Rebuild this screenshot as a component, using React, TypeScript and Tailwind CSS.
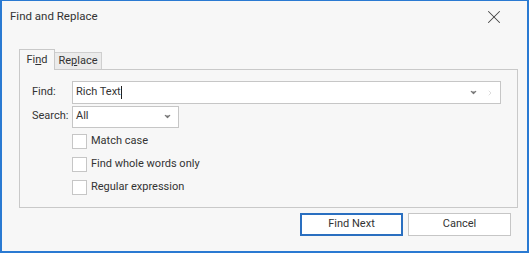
import { ChevronDown, ChevronRight, X } from 'lucide-react';

const Checkbox = ({ label }: { label: string }) => (
  <div className="flex items-center h-[23px]">
    <span className="w-[15px] h-[15px] border border-[#c6c6c6] bg-white mr-[4px]"></span>
    <span>{label}</span>
  </div>
);

const App = () => {
  return (
    <div className="w-[529px] h-[253px] bg-[#f7f7f7] border-t border-x-2 border-b-2 border-[#2a7ad2] text-[11px] text-[#333] font-['Roboto',sans-serif] flex flex-col">
      {/* title bar */}
      <div className="flex items-center justify-between h-[32px] pl-[8px] pr-[22px]">
        <span className="text-[11.5px]">Find and Replace</span>
        <X className="w-[22px] h-[22px] text-[#444]" strokeWidth={1.1} />
      </div>

      <div className="px-[17px] pt-[16px]">
        {/* tabs */}
        <div className="flex items-end h-[20px]">
          <div className="h-[21px] w-[36px] border border-b-0 border-[#c9c9c9] bg-[#f7f7f7] flex items-center justify-center relative top-[1px]">
            <span>Fi<span className="underline">n</span>d</span>
          </div>
          <div className="h-[17px] w-[47px] border border-l-0 border-b-0 border-[#cfcfcf] bg-[#ebebeb] flex items-center justify-center">
            <span>Re<span className="underline">p</span>lace</span>
          </div>
        </div>

        {/* panel */}
        <div className="w-[499px] h-[139px] border border-[#c9c9c9] pt-[11px] pl-[12px] pr-[16px]">
          <div className="flex items-center h-[23px]">
            <span className="w-[40px]">Find:</span>
            <div className="flex-1 h-[23px] bg-white border border-[#c6c6c6] flex items-center pl-[3px] pr-[6px]">
              <span className="flex-1">Rich Text<span className="inline-block w-px h-[13px] bg-[#222] align-middle"></span></span>
              <ChevronDown className="w-[9px] h-[9px] text-[#777] fill-[#777]" strokeWidth={3} />
              <ChevronRight className="w-[8px] h-[8px] text-[#ccc] ml-[8px]" strokeWidth={2} />
            </div>
          </div>
          <div className="flex items-center h-[23px] mt-[1px]">
            <span className="w-[40px]">Search:</span>
            <div className="w-[107px] h-[22px] bg-white border border-[#c6c6c6] flex items-center pl-[3px] pr-[6px]">
              <span className="flex-1">All</span>
              <ChevronDown className="w-[9px] h-[9px] text-[#777] fill-[#777]" strokeWidth={3} />
            </div>
          </div>
          <div className="pl-[40px] mt-[2px]">
            <Checkbox label="Match case" />
            <Checkbox label="Find whole words only" />
            <Checkbox label="Regular expression" />
          </div>
        </div>
      </div>

      {/* buttons */}
      <div className="flex justify-end gap-[5px] pr-[16px] pt-[5px]">
        <button className="w-[103px] h-[23px] bg-white border-2 border-[#2a6fc0]">Find Next</button>
        <button className="w-[103px] h-[23px] bg-white border border-[#c6c6c6]">Cancel</button>
      </div>
    </div>
  );
};

export default App;
